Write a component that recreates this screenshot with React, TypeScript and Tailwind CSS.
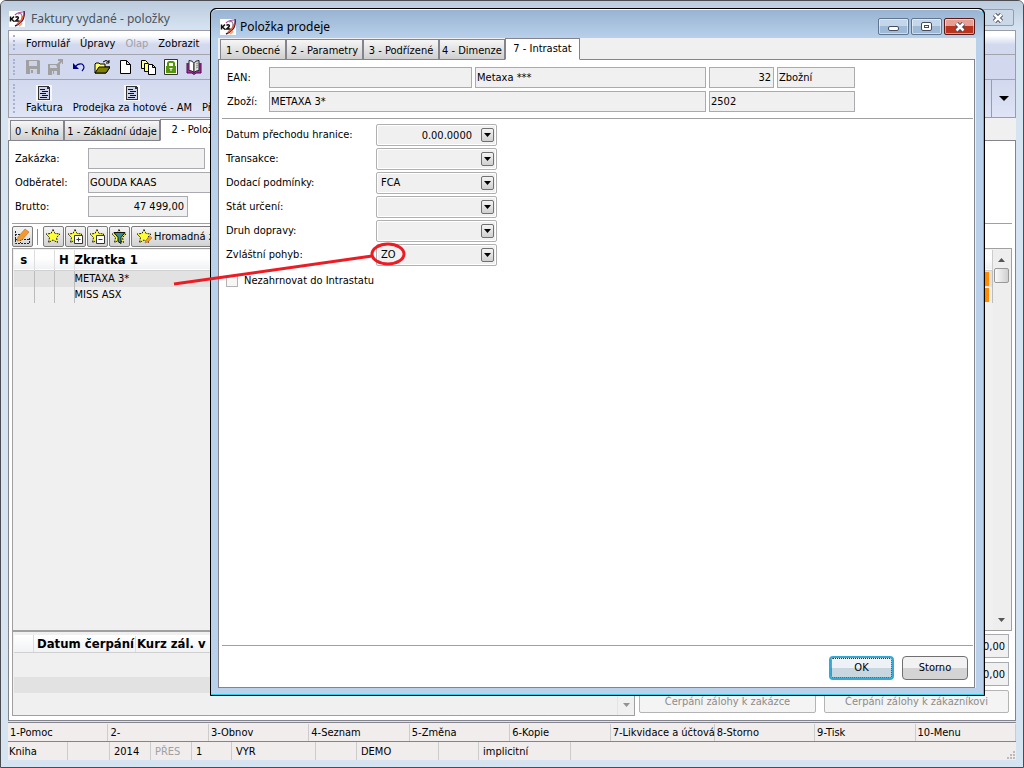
import React from 'react';
import clsx from 'clsx';

const FUNCTION_KEYS = ['1-Pomoc', '2-', '3-Obnov', '4-Seznam', '5-Změna', '6-Kopie', '7-Likvidace a účtová', '8-Storno', '9-Tisk', '10-Menu'];

const STATUS_CELLS = [
  { text: 'Kniha', width: 'w-[60px]' },
  { text: '', width: 'w-[42px]' },
  { text: '2014', width: 'w-[41px]' },
  { text: 'PŘES', width: 'w-[41px]', muted: true },
  { text: '1', width: 'w-[40px]' },
  { text: 'VYR', width: 'w-[84px]' },
  { text: '', width: 'w-[41px]' },
  { text: 'DEMO', width: 'w-[82px]' },
  { text: '', width: 'w-[40px]' },
  { text: 'implicitní', width: 'w-[92px]' },
];

const AppIcon = () => (
  <svg viewBox="0 0 16 16" className="size-4 shrink-0">
    <rect width="16" height="16" fill="#fff" />
    <path d="M6 4 Q9 1 14 1" fill="none" stroke="#b0489a" strokeWidth="1.200" />
    <path d="M9 3 Q13 1 13 6 Q13 11 9 13" fill="none" stroke="#8a8494" strokeWidth="1.200" />
    <path d="M15 0 Q16 7 12 11 Q9 14 6 15" fill="none" stroke="#4a1038" strokeWidth="1.500" />
    <path d="M14 5 Q13 10 8 13" fill="none" stroke="#e8643a" strokeWidth="1.500" />
    <path d="M10 15 13 12" stroke="#f0a878" strokeWidth="2" />
    <path d="M1.500 5.500v5M5 5.500 2.500 8 5 10.500M6.500 6.500Q7.500 5.500 9 6Q10.500 7 6.500 10H10.500" fill="none" stroke="#111" strokeWidth="1.500" />
  </svg>
);

const STAR = 'M8 1.500 10 5.500 15 6 11.500 9.500 12.500 14.500 8 12 3.500 14.500 4.500 9.500 1 6 6 5.500Z';

const Star = ({ children }: { children?: React.ReactNode }) => (
  <svg viewBox="0 0 17 17" className="size-[17px] shrink-0">
    <path d={STAR} fill="#ffff33" stroke="#222" strokeWidth="1" strokeDasharray="2 1" />
    {children}
  </svg>
);

const DocIcon = () => (
  <svg viewBox="0 0 16 16" className="size-4" shapeRendering="crispEdges">
    <rect width="16" height="16" fill="#f6f6f6" />
    <path d="M2 1h10l2 2v12H2z" fill="#333" />
    <path d="M3 2h8v2h2v10H3z" fill="#ccd3ea" />
    <path d="M4 4h5v1H4zM6 6h6v1H6zM4 8h6v1H4zM6 10h6v1H6zM4 12h7v1H4z" fill="#000090" />
  </svg>
);

const TOOL_ICONS: { name: string; icon: React.ReactNode }[] = [
  {
    name: 'Uložit',
    icon: (
      <>
        <path d="M1 1h13l1 1v13H1z" fill="#a0a0a0" />
        <path d="M4 2h8v5H4zM5 10h7v5H5z" fill="#ccd3e8" />
        <path d="M6 11h2v3H6z" fill="#a0a0a0" />
      </>
    ),
  },
  {
    name: 'Uložit a zavřít',
    icon: (
      <>
        <path d="M0 5h12v11H0z" fill="#a0a0a0" />
        <path d="M2 6h7v3H2zM4 12h5v4H4z" fill="#ccd3e8" />
        <path d="M5 12h1v3H5zM8 6l4-4h-2V0h5v5h-1V3l-5 5z" fill="#a0a0a0" />
      </>
    ),
  },
  {
    name: 'Zpět',
    icon: (
      <>
        <path d="M4 8 Q7 4 11 5 Q15 8 11 12" fill="none" stroke="#000090" strokeWidth="1.200" />
        <path d="M2 4v6h6z" fill="#000090" />
      </>
    ),
  },
  {
    name: 'Otevřít',
    icon: (
      <>
        <path d="M1 14V5l1-1h3l1 1h5v3h5l-4 6z" fill="#ffff66" stroke="#000" />
        <path d="M1 14 5 8h11l-4 6z" fill="#808000" stroke="#000" />
        <path d="M9 3q3-3 6 0M15 1v3h-3" fill="none" stroke="#000" />
      </>
    ),
  },
  { name: 'Nový', icon: <path d="M3.500 1.500h6l4 4v9h-10zM9.500 1.500v4h4" fill="#fff" stroke="#000" /> },
  {
    name: 'Kopírovat',
    icon: (
      <>
        <path d="M1.500 1.500h4l2 2v6h-6z" fill="#ffff99" stroke="#000" />
        <path d="M4.500 4.500h4l2 2v6h-6z" fill="#ffff66" stroke="#000" />
        <path d="M8.500 5.500h4l3 3v7h-7zM12.500 5.500v3h3" fill="#fff" stroke="#000" />
      </>
    ),
  },
  {
    name: 'Zámek',
    icon: (
      <>
        <path d="M1.500.500h13v15h-13z" fill="#fff" stroke="#333" />
        <path d="M3 7h10v7H3z" fill="#55950a" />
        <path d="M5 7.500V4.500Q5 3 6.500 3h3Q11 3 11 4.500v3" fill="none" stroke="#55950a" strokeWidth="2" />
        <path d="M6.500 9h3v1h-1v2h-1v-2h-1z" fill="#fff" />
      </>
    ),
  },
  {
    name: 'Kniha',
    icon: (
      <>
        <path d="M1 4v10h5l2 1.500L10 14h5V4" fill="#b030a0" stroke="#500050" />
        <path d="M3 1.500q4 0 5 3v9q-2-2-5-2z" fill="#fff" stroke="#222" />
        <path d="M13 1.500q-4 0-5 3v9q2-2 5-2z" fill="#e4e4e4" stroke="#222" />
        <path d="M10 5l2-1M10 7l2-1M10 9l2-1" stroke="#888" />
      </>
    ),
  },
];

const Grip = () => <div className="mt-1 mb-1 ml-1 w-[3px] border-l-2 border-dotted border-[#a9b2cc]" />;

interface TabItem {
  label: string;
  width: string;
}

const TabStrip = ({ tabs, active }: { tabs: TabItem[]; active: number }) => (
  <div role="tablist" className="flex h-[22px] items-end border-b border-[#84848e] bg-[#f0f0f0] pl-0.5">
    {tabs.map((tab, i) => (
      <button
        key={tab.label}
        role="tab"
        aria-selected={i === active}
        className={clsx(
          'shrink-0 border border-[#84848e] whitespace-nowrap',
          tab.width,
          i === active ? '-mb-px h-[22px] border-b-white bg-white' : 'h-5 border-b-0 bg-linear-to-b from-[#f6f6f6] to-[#cfcfcf] pt-0.5',
        )}
      >
        {tab.label}
      </button>
    ))}
  </div>
);

interface FieldProps {
  label: string;
  value?: string;
  tall?: boolean;
  className?: string;
}

const Field = ({ label, value = '', tall, className }: FieldProps) => (
  <input
    aria-label={label}
    defaultValue={value}
    className={clsx('shrink-0 border border-[#a9abb0] bg-[#f0f0f0] pl-px', tall ? 'h-6' : 'h-[21px]', className)}
  />
);

const Combo = ({ label, value = '', date }: { label: string; value?: string; date?: boolean }) => (
  <label className="flex h-[22px] items-center">
    <span className="w-[150px]">{label}</span>
    <span className="relative block h-[22px] w-[121px]">
      {date ? (
        <input defaultValue={value} className="size-full rounded-xs border border-[#b0b0b0] bg-[#f0f0f0] pr-6 text-right shadow-[inset_0_0_0_1px_white]" />
      ) : (
        <select defaultValue={value} className="size-full appearance-none rounded-xs border border-[#b0b0b0] bg-[#f0f0f0] pl-1 shadow-[inset_0_0_0_1px_white]">
          <option>{value}</option>
        </select>
      )}
      <span className="pointer-events-none absolute top-1 right-[3px] flex h-[14px] w-[13px] items-center justify-center rounded-xs border border-[#707070] bg-linear-to-b from-[#f4f4f4] to-[#d0d0d0]">
        <svg viewBox="0 0 7 4" className="h-1 w-[7px]">
          <path d="M0 0h7L3.500 4z" />
        </svg>
      </span>
    </span>
  </label>
);

const ToolButton = ({ name, children, className }: { name: string; children: React.ReactNode; className?: string }) => (
  <button
    aria-label={name}
    className={clsx('flex h-[21px] shrink-0 items-center rounded-xs border border-[#7c7c7c] bg-linear-to-b from-[#f5f5f5] to-[#d2d2d2]', className ?? 'w-[21px] justify-center')}
  >
    {children}
  </button>
);

const Arrow = ({ up }: { up?: boolean }) => (
  <svg viewBox="0 0 7 4" className="h-1 w-[7px]">
    <path d={up ? 'M0 4h7L3.500 0z' : 'M0 0h7L3.500 4z'} fill="#555" />
  </svg>
);

const CloseGlyph = () => (
  <svg viewBox="0 0 12 10" className="h-2.5 w-3">
    <path d="M2.500 1.500 9.500 8.500M9.500 1.500 2.500 8.500" stroke="#454c60" strokeWidth="4.500" />
    <path d="M2.500 1.500 9.500 8.500M9.500 1.500 2.500 8.500" stroke="#fff" strokeWidth="2.500" />
  </svg>
);

const MainWindow = () => (
  <main className="flex min-h-screen flex-col overflow-hidden rounded-t-md border border-[#4b4b52] bg-[#d6e4f2] px-[7px] pb-[7px]">
    <header className="-mx-[7px] flex h-[29px] shrink-0 items-center justify-between bg-linear-to-b from-[#bccbdd] to-[#d6e4f2] pr-[9px] pl-2">
      <div className="flex items-center gap-1.5 pt-1.5 font-['Noto_Sans',sans-serif] text-xs leading-4 text-[#4a5563]">
        <AppIcon />
        Faktury vydané - položky
      </div>
      <button aria-label="Zavřít" className="mt-1 flex h-[17px] w-8 items-center justify-center rounded-xs border border-[#929db0] bg-[#cbd8e8]">
        <CloseGlyph />
      </button>
    </header>

    {/* Menu and toolbars */}
    <div className="shrink-0 border border-[#9c9ca6]">
      <nav className="flex h-6 border-b border-[#a4a4ac] bg-linear-to-b from-white from-20% to-[#d2d9ee] to-60%">
        <Grip />
        <div className="flex items-center gap-2.5 pt-[3px] pl-2.5">
          <button>Formulář</button>
          <button>Úpravy</button>
          <button disabled className="text-[#a0a0a8]">Olap</button>
          <button>Zobrazit</button>
        </div>
      </nav>
      <div className="flex h-[25px] border-b border-[#a4a4ac] bg-[#d2d9ee]">
        <Grip />
        <div className="flex items-center gap-[7px] pl-[9px]">
          {TOOL_ICONS.map((tool) => (
            <button key={tool.name} aria-label={tool.name}>
              <svg viewBox="0 0 16 16" className="size-4">
                {tool.icon}
              </svg>
            </button>
          ))}
        </div>
      </div>
      <div className="flex h-[37px] bg-linear-to-b from-[#d2d9ee] to-[#dfe4f6]">
        <Grip />
        <div className="flex flex-1 gap-2.5 pt-[5px] pl-2.5">
          {['Faktura', 'Prodejka za hotové - AM'].map((label) => (
            <button key={label} className="flex flex-col items-center leading-[14px]">
              <DocIcon />
              {label}
            </button>
          ))}
          <button className="self-start pt-4 leading-[14px]">Př</button>
        </div>
        <button aria-label="Další" className="flex w-6 items-center justify-center border-l border-[#9c9ca6]">
          <svg viewBox="0 0 10 5" className="h-[5px] w-2.5">
            <path d="M0 0h10L5 5z" />
          </svg>
        </button>
      </div>
    </div>

    <div className="bg-[#f0f0f0] pt-px">
      <TabStrip
        active={2}
        tabs={[
          { label: '0 - Kniha', width: 'w-[54px]' },
          { label: '1 - Základní údaje', width: 'w-[96px]' },
          { label: '2 - Položky', width: 'w-[76px]' },
        ]}
      />
    </div>

    <section className="flex flex-1 flex-col border-x border-b border-[#84848e] bg-white px-[3px]">
      <div className="flex flex-col gap-[3px] pt-[7px] pb-1.5 pl-[3px]">
        <label className="flex items-center">
          <span className="w-[73px]">Zakázka:</span>
          <Field label="Zakázka" className="w-[117px]" />
        </label>
        <label className="flex items-center">
          <span className="w-[73px]">Odběratel:</span>
          <Field label="Odběratel" value="GOUDA KAAS" className="w-[240px]" />
        </label>
        <label className="flex items-center">
          <span className="w-[73px]">Brutto:</span>
          <Field label="Brutto" value="47 499,00" className="w-[100px] pr-[3px] text-right" />
        </label>
      </div>

      <div className="flex items-center gap-px border-t border-[#a0a0a0] pt-0.5 pb-px">
        <ToolButton name="Upravit">
          <svg viewBox="0 0 17 17" className="size-[17px]">
            <path d="M1.500 3v12.500h14V9M1 6.500h5M1 11.500h15M6.500 8v7" fill="none" stroke="#222" strokeDasharray="2 1" />
            <path d="M4 9 11 1l4 3-7 8-5 1z" fill="#f09a30" stroke="#a86010" strokeWidth=".5" />
          </svg>
        </ToolButton>
        <span className="mr-1 ml-[3px] h-4 w-px bg-[#8c8c8c]" />
        <ToolButton name="Označit"><Star /></ToolButton>
        <ToolButton name="Přidat označení">
          <Star>
            <path d="M7.500 7.500h8v8h-8zM11.500 9.500v4M9.500 11.500h4" fill="#fff" stroke="#333" />
          </Star>
        </ToolButton>
        <ToolButton name="Odebrat označení">
          <Star>
            <path d="M7.500 7.500h8v8h-8zM9.500 11.500h4" fill="#fff" stroke="#333" />
          </Star>
        </ToolButton>
        <ToolButton name="Filtr">
          <Star>
            <path d="M3 4.500h11l-4 5v6l-3-2v-4z" fill="#3c8a90" stroke="#111" />
          </Star>
        </ToolButton>
        <ToolButton name="Hromadná změna" className="w-[110px] gap-px pl-1 whitespace-nowrap">
          <Star>
            <path d="M9 15l1-3 4-4 2 2-4 4z" fill="#f09a30" stroke="#a86010" strokeWidth=".5" />
          </Star>
          Hromadná z
        </ToolButton>
      </div>

      <div className="flex flex-1 border border-[#a0a0a0] bg-[#f0f0f0] p-px pb-0">
        <div className="flex-1">
          <table className="w-full table-fixed border-collapse">
            <colgroup>
              <col className="w-5" />
              <col className="w-5" />
              <col className="w-5" />
              <col />
              <col className="w-[30px]" />
            </colgroup>
            <thead>
              <tr className="h-5 border-b border-[#d0d0d0] bg-linear-to-b from-white from-40% to-[#f0f2f4] text-left text-[13px] leading-4">
                <th className="border-r border-[#ddd] text-center">s</th>
                <th className="border-r border-[#ddd]" />
                <th className="border-r border-[#ddd] text-center">H</th>
                <th>Zkratka 1</th>
                <th className="border-r border-[#ccc] pr-[7px] text-right">:</th>
              </tr>
            </thead>
            <tbody>
              {['METAXA 3*', 'MISS ASX'].map((name, i) => (
                <tr key={name} className={clsx('h-4 leading-4', i === 0 && 'bg-[#e2e2e2]')}>
                  <td className="border-r border-[#bbb]" />
                  <td className="border-r border-[#bbb]" />
                  <td className="border-r border-[#bbb]" />
                  <td>{name}</td>
                  <td className="border-r border-[#bbb] pr-[3px]">
                    <div className="h-3.5 bg-[#ff8c00]" />
                  </td>
                </tr>
              ))}
            </tbody>
          </table>
        </div>
        <div className="flex w-[17px] flex-col items-center bg-[#eee] pt-2 pb-2">
          <Arrow up />
          <div className="mt-1.5 size-[15px] rounded-xs border border-[#999] bg-linear-to-r from-[#fafafa] to-[#d0d0d0]" />
          <div className="flex-1" />
          <Arrow />
        </div>
      </div>

      <div className="flex h-[89px] shrink-0 gap-1 pb-1">
        <div className="flex flex-1 border border-[#a0a0a0] bg-[#f0f0f0]">
          <div className="flex-1 pt-[3px] pl-px">
            <div className="flex h-[18px] items-center border-b border-[#d0d0d0] bg-linear-to-b from-white to-[#f0f2f4] text-[13px] font-bold whitespace-nowrap">
              <span className="h-full w-5 border-r border-[#ddd]" />
              <span className="w-[102px] border-r border-[#ddd] pl-[3px]">Datum čerpání</span>
              <span className="pl-px">Kurz zál. v</span>
            </div>
            <div className="mt-6 h-4 bg-[#e2e2e2]" />
          </div>
          <div className="flex w-[17px] flex-col items-center justify-end border-l border-[#ddd] bg-[#f0f0f0] pb-2 opacity-60">
            <Arrow />
          </div>
        </div>
        <div className="flex w-[373px] flex-col items-end gap-1 pt-[3px] pr-[3px]">
          <Field label="Celkem" value="0,00" tall className="w-[120px] pr-[3px] text-right" />
          <Field label="Zbývá" value="0,00" tall className="w-[120px] pr-[3px] text-right" />
          <div className="flex w-full gap-2 text-[#8c8c8c]">
            <button disabled className="h-[23px] w-[177px] rounded-xs border border-[#b4b4b4] bg-[#f4f4f4]">Čerpání zálohy k zakázce</button>
            <button disabled className="h-[23px] flex-1 rounded-xs border border-[#b4b4b4] bg-[#f4f4f4]">Čerpání zálohy k zákazníkovi</button>
          </div>
        </div>
      </div>
    </section>

    <div className="mt-px grid h-[19px] shrink-0 grid-cols-[repeat(6,minmax(0,1fr))_104px_repeat(3,minmax(0,1fr))] border-t border-[#84848e] bg-[#f1eded] pt-px">
      {FUNCTION_KEYS.map((key) => (
        <button key={key} className="border-r border-[#ccc] pl-0.5 text-left whitespace-nowrap">
          {key}
        </button>
      ))}
    </div>
    <footer className="relative flex h-[19px] shrink-0 border-t border-[#84848e] bg-[#f1eded]">
      {STATUS_CELLS.map((cell, i) => (
        <span key={i} className={clsx('shrink-0 border-r border-[#ccc] leading-5', i === 0 ? 'pl-px' : 'pl-1', cell.width, cell.muted && 'text-[#a0a0a0]')}>
          {cell.text}
        </span>
      ))}
      <svg viewBox="0 0 9 9" className="absolute right-0 bottom-0 size-[9px]">
        <path d="M6 0h2v2H6zM6 3h2v2H6zM6 6h2v2H6zM3 3h2v2H3zM3 6h2v2H3zM0 6h2v2H0z" fill="#bbb" />
      </svg>
    </footer>
  </main>
);

const CAPTION = 'flex h-[17px] w-[31px] items-center justify-center rounded-xs border shadow-[inset_0_0_0_1px_rgba(255,255,255,0.5)]';

const ItemDialog = () => (
  <div role="dialog" aria-label="Položka prodeje" className="absolute top-2 right-[39px] bottom-[72px] left-[210px] flex rounded-t-md border border-black bg-black">
    <div className="flex flex-1 flex-col rounded-t-md border-t border-r border-b border-t-white border-r-[#2fd0e8] border-b-[#2fd0e8] bg-[#b9d1ea] pr-[7px] pb-1.5 pl-[7px]">
      <header className="-mx-[7px] flex h-7 shrink-0 items-start justify-between rounded-t-md bg-linear-to-b from-[#98b4d2] to-[#b8d0ea] pr-2 pl-[9px]">
        <div className="flex items-center gap-1 pt-[9px] font-['Noto_Sans',sans-serif] text-xs leading-4">
          <AppIcon />
          Položka prodeje
        </div>
        <div className="flex gap-0.5 pt-2">
          <button aria-label="Minimalizovat" className={clsx(CAPTION, 'border-[#5f7590] bg-linear-to-b from-[#c4d6ea] from-50% to-[#9fbad6] to-50%')}>
            <span className="mt-1 h-[5px] w-[11px] rounded-xs border border-[#454c60] bg-white" />
          </button>
          <button aria-label="Maximalizovat" className={clsx(CAPTION, 'border-[#5f7590] bg-linear-to-b from-[#c4d6ea] from-50% to-[#9fbad6] to-50%')}>
            <span className="flex h-[9px] w-[11px] items-center justify-center rounded-xs border border-[#454c60] bg-white">
              <span className="h-[3px] w-[5px] border border-[#454c60]" />
            </span>
          </button>
          <button aria-label="Zavřít" className={clsx(CAPTION, 'border-[#5a1a1a] bg-linear-to-b from-[#e6a093] from-50% to-[#b8341e] to-50%')}>
            <CloseGlyph />
          </button>
        </div>
      </header>

      <div className="flex flex-1 flex-col bg-[#f0f0f0] pr-px">
        <TabStrip
          active={4}
          tabs={[
            { label: '1 - Obecné', width: 'w-[66px]' },
            { label: '2 - Parametry', width: 'w-[77px]' },
            { label: '3 - Podřízené', width: 'w-[76px]' },
            { label: '4 - Dimenze', width: 'w-[66px]' },
            { label: '7 - Intrastat', width: 'w-[75px]' },
          ]}
        />
        <div className="flex flex-1 flex-col border-x border-b border-[#84848e] bg-white pr-px pl-[3px]">
          <div className="flex flex-col gap-[3px] border-b border-[#a0a0a0] pt-[7px] pb-1.5 pl-[5px]">
            <div className="flex items-center gap-[3px]">
              <span className="w-[39px]">EAN:</span>
              <Field label="EAN" className="w-[203px]" />
              <Field label="Název" value="Metaxa ***" className="w-[231px]" />
              <Field label="Kód" value="32" className="w-[65px] pr-0.5 text-right" />
              <Field label="Druh" value="Zbožní" className="w-[78px]" />
            </div>
            <div className="flex items-center gap-[3px]">
              <span className="w-[39px]">Zboží:</span>
              <Field label="Zboží" value="METAXA 3*" className="w-[437px]" />
              <Field label="Číslo zboží" value="2502" className="w-[146px]" />
            </div>
          </div>

          <div className="flex flex-1 flex-col gap-0.5 pt-[5px] pl-1">
            <Combo label="Datum přechodu hranice:" value="0.00.0000" date />
            <Combo label="Transakce:" />
            <Combo label="Dodací podmínky:" value="FCA" />
            <Combo label="Stát určení:" />
            <Combo label="Druh dopravy:" />
            <Combo label="Zvláštní pohyb:" value="ZO" />
            <label className="flex h-6 items-center gap-1.5 pt-0.5">
              <input type="checkbox" className="size-3 appearance-none border border-[#b4b4b4] bg-[#f6f6f6]" />
              Nezahrnovat do Intrastatu
            </label>
          </div>

          <div className="flex h-[42px] shrink-0 items-start justify-end gap-2 border-t border-[#a0a0a0] pt-2.5 pr-[5px]">
            <button className="h-6 w-[65px] rounded-sm border-2 border-[#35a9d6] bg-linear-to-b from-[#eef2f6] from-50% to-[#c8d6e0] to-50% outline-1 -outline-offset-3 outline-dotted outline-[#333]">
              OK
            </button>
            <button className="h-6 w-[66px] rounded-sm border border-[#707070] bg-linear-to-b from-[#f2f2f2] from-50% to-[#d4d4d4] to-50%">Storno</button>
          </div>
        </div>
      </div>
    </div>
  </div>
);

export default function App() {
  return (
    <div className="relative font-['DejaVu_Sans_Condensed','DejaVu_Sans',sans-serif] text-[11px] leading-4 text-black">
      <MainWindow />
      <ItemDialog />
      {/* Red marker over the item row and its code */}
      <svg viewBox="0 0 240 50" className="pointer-events-none absolute top-[240px] left-[170px] h-[50px] w-[240px]">
        <path d="M4 44 202 16" stroke="#ed1c24" strokeWidth="3" />
        <ellipse cx="218" cy="14" rx="16" ry="10" fill="none" stroke="#ed1c24" strokeWidth="3" />
      </svg>
    </div>
  );
}
